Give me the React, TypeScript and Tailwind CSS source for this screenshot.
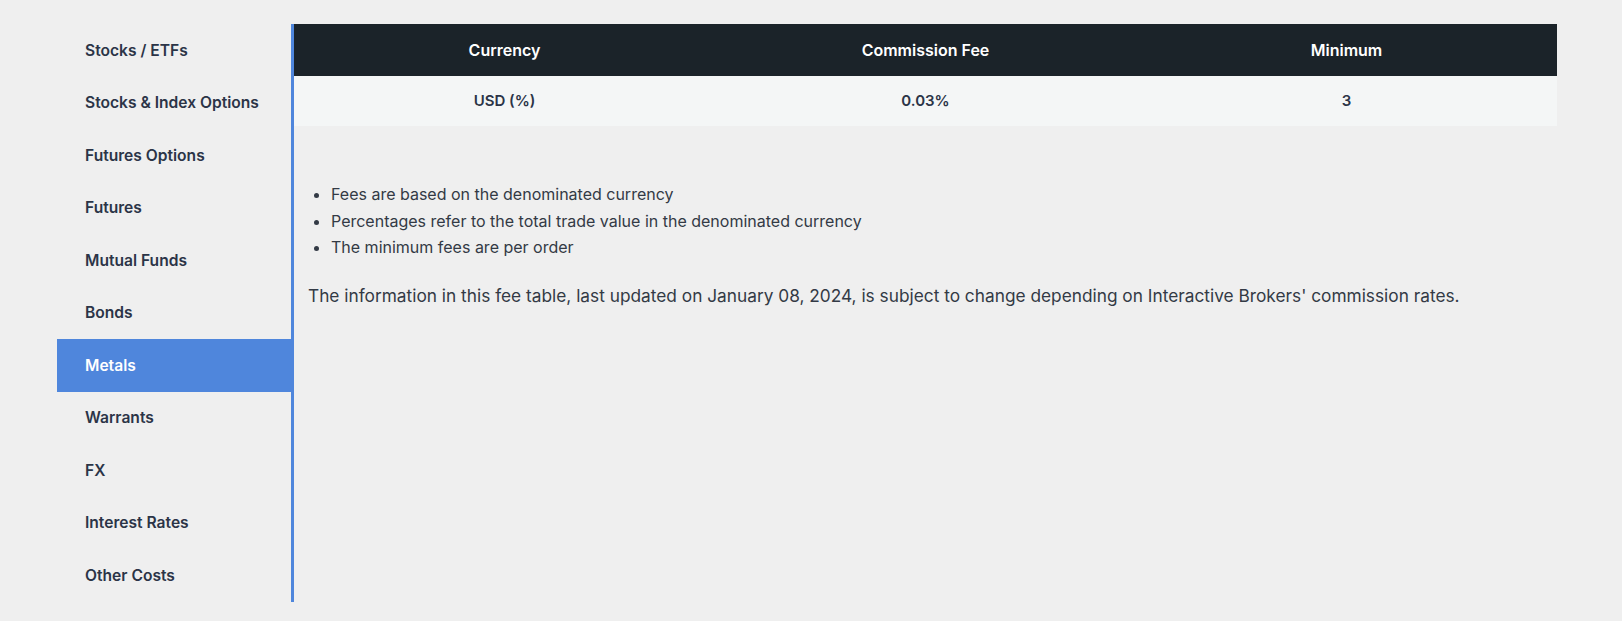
import { useState } from "react";

const categories = [
  "Stocks / ETFs",
  "Stocks & Index Options",
  "Futures Options",
  "Futures",
  "Mutual Funds",
  "Bonds",
  "Metals",
  "Warrants",
  "FX",
  "Interest Rates",
  "Other Costs",
];

const notes = [
  "Fees are based on the denominated currency",
  "Percentages refer to the total trade value in the denominated currency",
  "The minimum fees are per order",
];

const font = { fontFamily: "Inter, 'Noto Sans', sans-serif" };

const App = () => {
  const [active, setActive] = useState("Metals");

  return (
    <div className="min-h-[621px] bg-[#efefef] pt-[24px]" style={font}>
      <div className="ml-[57px] flex w-[1500px]">
        <nav className="w-[237px] shrink-0 border-r-[3px] border-[#4f86dc]">
          {categories.map((name) => (
            <button
              key={name}
              onClick={() => setActive(name)}
              className={
                active === name
                  ? "flex h-[52.5px] w-full items-center bg-[#4f86dc] pl-[28px] text-left text-[15.6px] font-semibold text-white"
                  : "flex h-[52.5px] w-full items-center pl-[28px] text-left text-[15.6px] font-semibold text-[#2b3447]"
              }
            >
              {name}
            </button>
          ))}
        </nav>

        <section className="flex-1">
          <div className="grid grid-cols-3 bg-[#1b2329] text-center text-[16px] font-semibold text-white">
            <div className="flex h-[52px] items-center justify-center">Currency</div>
            <div className="flex h-[52px] items-center justify-center">Commission Fee</div>
            <div className="flex h-[52px] items-center justify-center">Minimum</div>
          </div>
          <div className="grid grid-cols-3 bg-[#f4f6f6] text-center text-[15px] font-semibold text-[#2b3447]">
            <div className="flex h-[50px] items-center justify-center">USD (%)</div>
            <div className="flex h-[50px] items-center justify-center">0.03%</div>
            <div className="flex h-[50px] items-center justify-center">3</div>
          </div>

          <div className="pl-[14px] pt-[55px] text-[#333a45]">
            <ul className="list-disc pl-[23px] text-[16px] leading-[26.5px]">
              {notes.map((n) => (
                <li key={n}>{n}</li>
              ))}
            </ul>
            <p className="mt-[21px] text-[17.3px] leading-[28px]">
              The information in this fee table, last updated on January 08, 2024, is subject to change depending on
              Interactive Brokers' commission rates.
            </p>
          </div>
        </section>
      </div>
    </div>
  );
};

export default App;
